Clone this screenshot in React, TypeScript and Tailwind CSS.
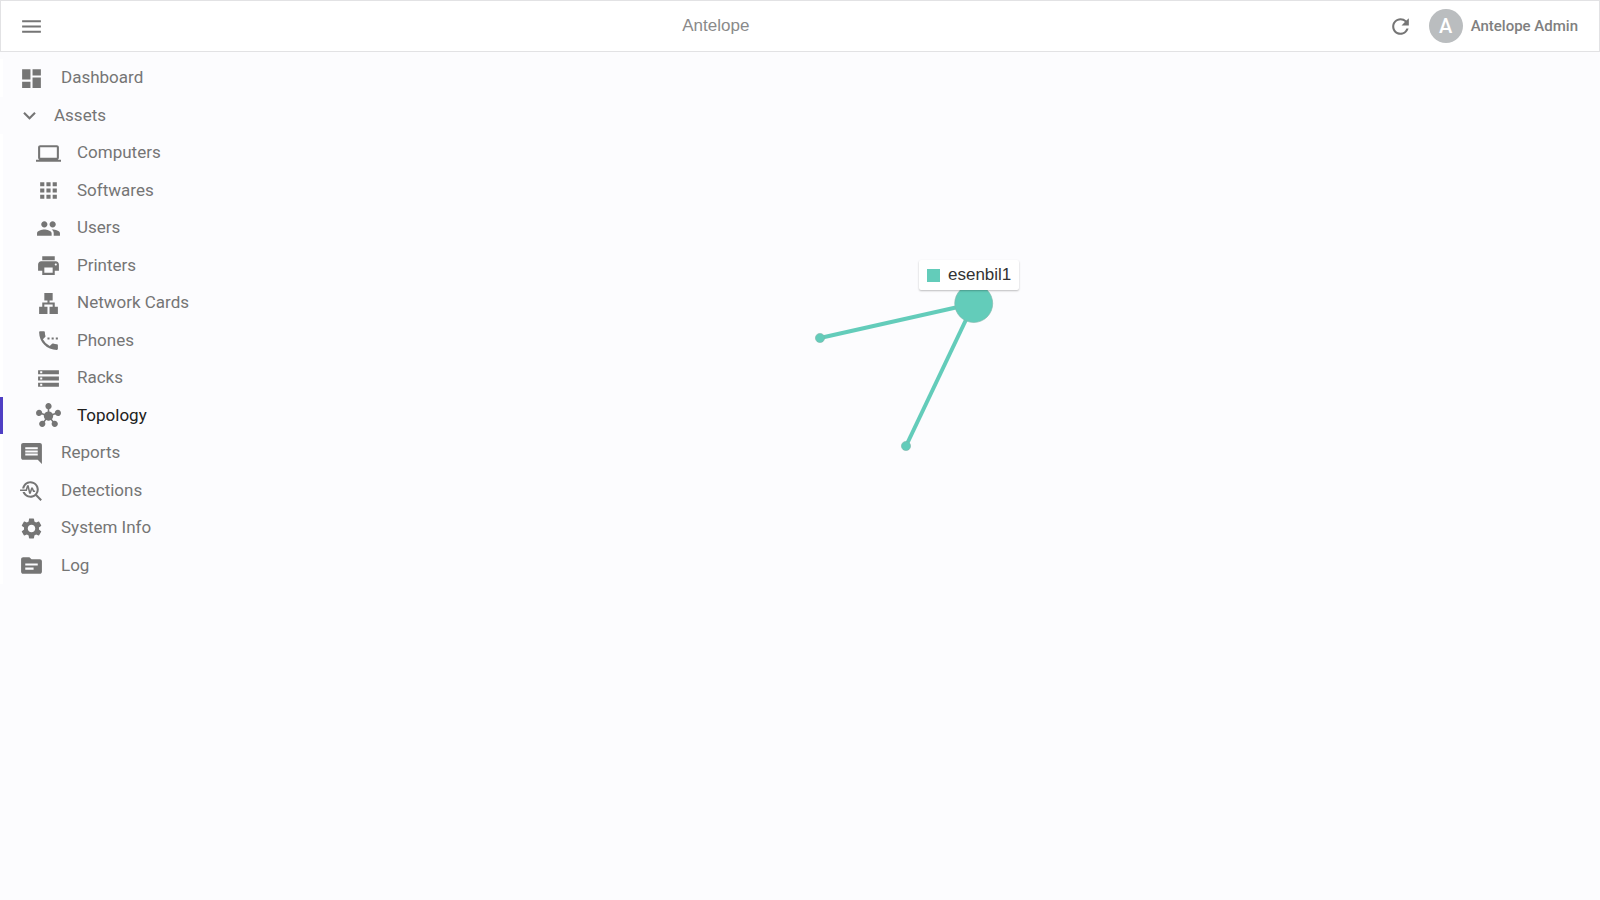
import { useState } from 'react';
import type { IconType } from 'react-icons';
import {
  MdApps,
  MdComment,
  MdComputer,
  MdDashboard,
  MdExpandMore,
  MdHub,
  MdLan,
  MdMenu,
  MdPeople,
  MdPrint,
  MdRefresh,
  MdSettings,
  MdSettingsPhone,
  MdSource,
  MdStorage,
  MdTroubleshoot,
} from 'react-icons/md';

interface MenuItem {
  label: string;
  icon: IconType;
  nested?: boolean;
}

const assetItems: MenuItem[] = [
  { label: 'Computers', icon: MdComputer, nested: true },
  { label: 'Softwares', icon: MdApps, nested: true },
  { label: 'Users', icon: MdPeople, nested: true },
  { label: 'Printers', icon: MdPrint, nested: true },
  { label: 'Network Cards', icon: MdLan, nested: true },
  { label: 'Phones', icon: MdSettingsPhone, nested: true },
  { label: 'Racks', icon: MdStorage, nested: true },
  { label: 'Topology', icon: MdHub, nested: true },
];

const bottomItems: MenuItem[] = [
  { label: 'Reports', icon: MdComment },
  { label: 'Detections', icon: MdTroubleshoot },
  { label: 'System Info', icon: MdSettings },
  { label: 'Log', icon: MdSource },
];

const hosts = [
  { x: 20, y: 88 },
  { x: 106, y: 196 },
];

function MenuRow({ item, active = false }: { item: MenuItem; active?: boolean }) {
  const Icon = item.icon;
  return (
    <li className="flex odd:h-[38px] even:h-[37px]">
      <a
        href="#"
        aria-current={active ? 'page' : undefined}
        className={`flex flex-1 items-center border-l-3 ${
          item.nested ? 'gap-4 pl-[33px]' : 'gap-[17px] pl-4'
        } ${active ? 'border-[#4f3fc4] text-[#212121]' : 'border-white'}`}
      >
        <Icon size={25} className="text-[#757575]" />
        {item.label}
      </a>
    </li>
  );
}

function Header() {
  return (
    <header className="flex h-13 items-center border border-[#e2e2e4] bg-white pr-[21px] pl-[18px] text-[#757575]">
      <button type="button" aria-label="Toggle menu">
        <MdMenu size={25} />
      </button>
      <h1 className="flex-1 text-center font-['Liberation_Sans',sans-serif] text-[17px] text-[#8a8a8a]">
        Antelope
      </h1>
      <div className="flex items-center">
        <button type="button" aria-label="Refresh">
          <MdRefresh size={25} />
        </button>
        <button type="button" className="ml-4 flex items-center gap-2 text-[15px] font-medium text-[#808080]">
          <span className="flex size-[34px] items-center justify-center rounded-full bg-[#babdbf] text-xl text-white">
            A
          </span>
          Antelope Admin
        </button>
      </div>
    </header>
  );
}

function TopologyGraph() {
  return (
    <main className="relative flex-1">
      <svg width="200" height="210" className="absolute top-[198px] left-[560px]">
        <g stroke="#63ccba" strokeWidth="4">
          {hosts.map((h) => (
            <line key={h.x} x1="173.7" y1="53.5" x2={h.x} y2={h.y} />
          ))}
        </g>
        <g fill="#63ccba" stroke="#7fb5aa" strokeWidth="0.6">
          <circle cx="173.7" cy="53.5" r="19" />
          {hosts.map((h) => (
            <circle key={h.x} cx={h.x} cy={h.y} r="4.6" />
          ))}
        </g>
      </svg>
      <div className="absolute top-[208px] left-[679px] flex h-[30px] items-center gap-2 rounded-xs bg-white px-2 font-['Liberation_Sans',sans-serif] text-[17px] text-[#333333] shadow-[0_1px_2px_rgba(0,0,0,0.25)]">
        <span className="size-[13px] bg-[#63ccba]" />
        esenbil1
      </div>
    </main>
  );
}

export default function App() {
  const [open, setOpen] = useState(true);

  return (
    <div className="flex min-h-screen flex-col bg-[#fcfcfe] font-[Roboto,sans-serif]">
      <Header />
      <div className="flex flex-1">
        <nav className="w-60 pt-[7px] text-[17px] text-[#757575]">
          <ul>
            <MenuRow item={{ label: 'Dashboard', icon: MdDashboard }} />
            <li className="flex odd:h-[38px] even:h-[37px]">
              <button
                type="button"
                aria-expanded={open}
                onClick={() => setOpen(!open)}
                className="flex flex-1 items-center gap-3 pl-[17px]"
              >
                <MdExpandMore size={25} />
                Assets
              </button>
            </li>
            {open &&
              assetItems.map((item) => (
                <MenuRow key={item.label} item={item} active={item.label === 'Topology'} />
              ))}
            {bottomItems.map((item) => (
              <MenuRow key={item.label} item={item} />
            ))}
          </ul>
        </nav>
        <TopologyGraph />
      </div>
    </div>
  );
}
